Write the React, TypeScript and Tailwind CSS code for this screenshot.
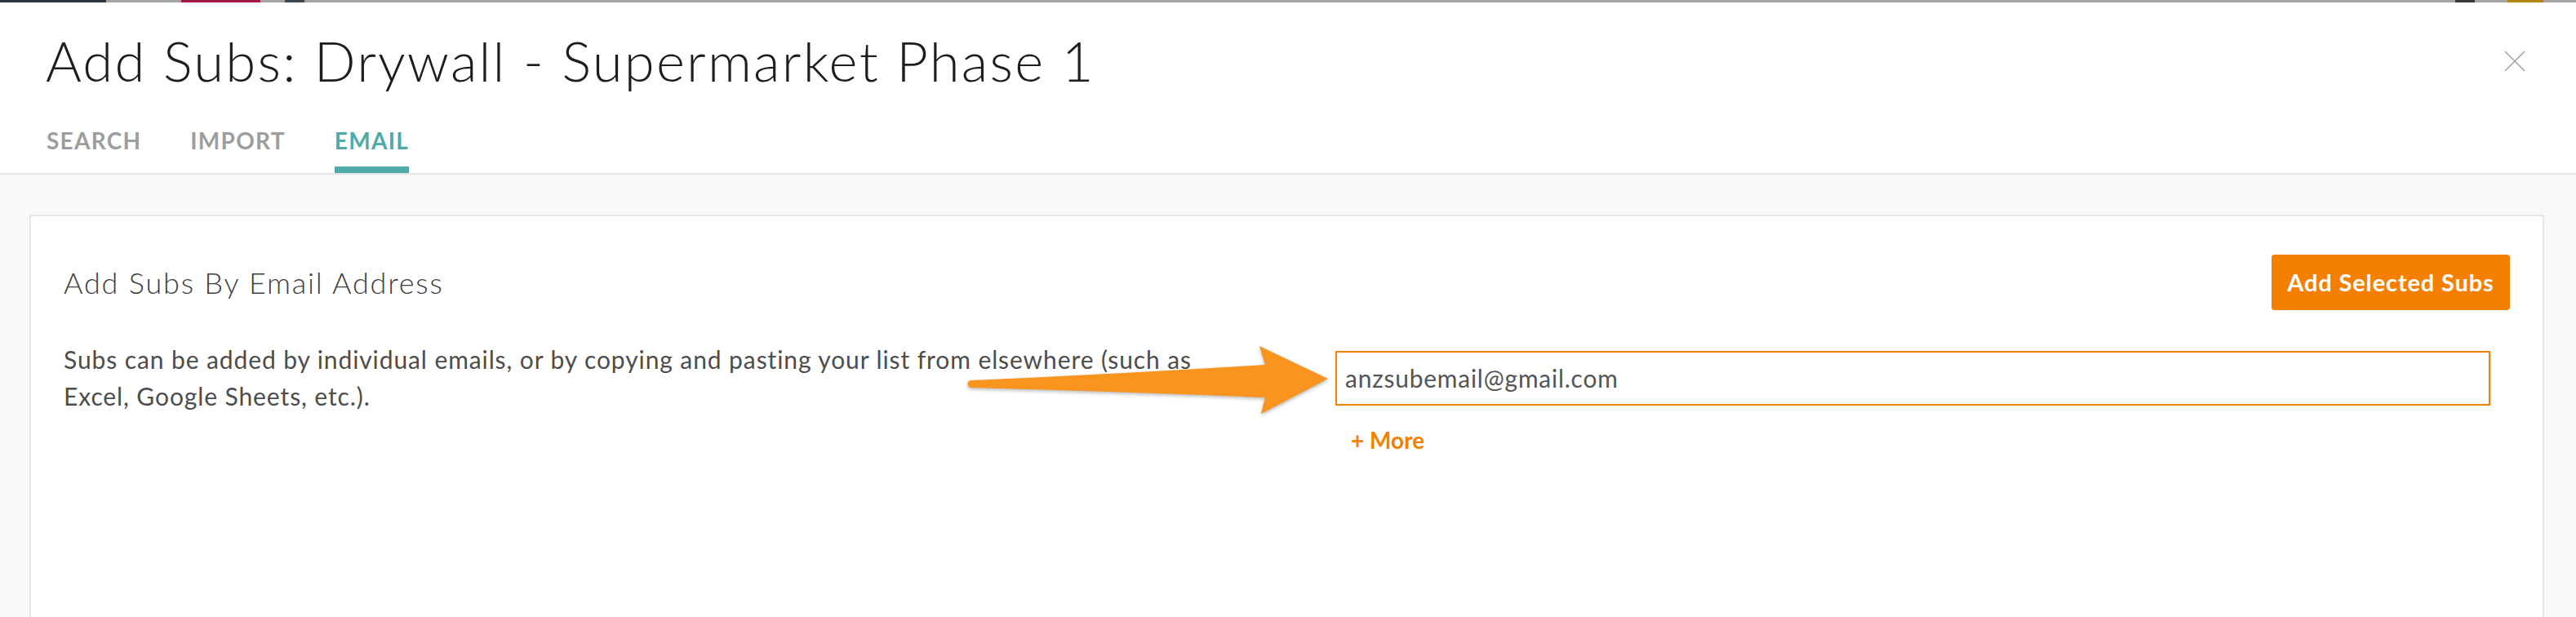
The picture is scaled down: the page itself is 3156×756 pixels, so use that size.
import type { ReactNode } from 'react';

const TABS = [
  { label: 'SEARCH', active: false },
  { label: 'IMPORT', active: false },
  { label: 'EMAIL', active: true },
];

// the page behind the modal peeks through as a thin strip at the very top
function BackdropStrip() {
  return (
    <div className="flex h-[3px] shrink-0 bg-[#a4a4a4]" aria-hidden="true">
      <span className="w-[130px] bg-[#2b3644]" />
      <span className="w-[92px]" />
      <span className="w-[97px] bg-[#a01a42]" />
      <span className="w-[30px]" />
      <span className="w-[24px] bg-[#3b4652]" />
      <span className="flex-1" />
      <span className="w-[24px] bg-[#3a3a3a]" />
      <span className="w-[40px]" />
      <span className="w-[44px] bg-[#b4860e]" />
      <span className="w-[40px]" />
    </div>
  );
}

function CloseIcon() {
  return (
    <svg width="26" height="26" viewBox="0 0 26 26" aria-hidden="true">
      <path d="M1 1 25 25M25 1 1 25" stroke="#a3a3a3" strokeWidth="1.6" fill="none" />
    </svg>
  );
}

function Arrow() {
  return (
    <svg
      className="pointer-events-none absolute left-[1147px] top-[155px] drop-shadow-[0_2px_2px_rgba(0,0,0,0.28)]"
      width="450"
      height="95"
      viewBox="0 0 450 95"
      aria-hidden="true"
    >
      <path
        d="M5 46 Q190 38 365 27 L358 4 L442 44 L360 87 L365 67 Q190 60 5 55 A4.5 4.5 0 0 1 5 46 Z"
        fill="#f9941f"
      />
    </svg>
  );
}

function Tab({ active, children }: { active: boolean; children: ReactNode }) {
  return (
    <div className="flex flex-col">
      <span
        className={
          'text-[28px] font-bold leading-none tracking-[0.045em] ' +
          (active ? 'text-[#4fa9a6]' : 'text-[#9d9d9d]')
        }
      >
        {children}
      </span>
      <span className={'mt-[18px] h-[8px] ' + (active ? 'bg-[#4fa9a6]' : 'bg-transparent')} />
    </div>
  );
}

export default function App() {
  return (
    <div className="flex h-[756px] w-full flex-col overflow-hidden bg-white font-['Lato','Liberation_Sans',sans-serif]">
      <BackdropStrip />

      <header className="shrink-0 border-b-2 border-[#e3e3e3]">
        <div className="flex items-center justify-between pl-[56px] pr-[62px] pt-[38px]">
          <h1 className="text-[67px] font-light leading-none tracking-[0.033em] text-[#1d1d1d]">
            Add Subs: Drywall - Supermarket Phase 1
          </h1>
          <button type="button" aria-label="Close" className="p-0">
            <CloseIcon />
          </button>
        </div>
        <nav className="mt-[50px] flex gap-[60px] pl-[57px]">
          {TABS.map((tab) => (
            <Tab key={tab.label} active={tab.active}>
              {tab.label}
            </Tab>
          ))}
        </nav>
      </header>

      <main className="flex flex-1 flex-col bg-[#f9f9f9] pl-[36px] pr-[39px] pt-[49px]">
        <section className="relative flex-1 border-2 border-b-0 border-[#e6e6e6] bg-white px-[40px] pt-[47px]">
          <div className="flex items-center justify-between">
            <h2 className="text-[36px] font-light leading-none tracking-[0.05em] text-[#3e3e3e]">
              Add Subs By Email Address
            </h2>
            <button
              type="button"
              className="flex h-[68px] w-[292px] items-center justify-center rounded-[4px] bg-[#f57f00] text-[29px] font-bold tracking-[0.03em] text-white"
            >
              Add Selected Subs
            </button>
          </div>

          <div className="mt-[38px] flex">
            <p className="w-[1420px] shrink-0 text-[30px] leading-[45px] tracking-[0.03em] text-[#4d4d4d]">
              Subs can be added by individual emails, or by copying and pasting your list from
              elsewhere (such as Excel, Google Sheets, etc.).
            </p>
            <div className="ml-[138px] flex flex-1 flex-col pr-[24px] pt-[12px]">
              <div className="flex h-[67px] items-center border-2 border-[#f57f00] pl-[10px] text-[30px] tracking-[0.025em] text-[#555555]">
                anzsubemail@gmail.com
              </div>
              <button
                type="button"
                className="mt-[28px] self-start pl-[19px] text-[28px] font-bold leading-none text-[#f57f00]"
              >
                + More
              </button>
            </div>
          </div>

          <Arrow />
        </section>
      </main>
    </div>
  );
}
